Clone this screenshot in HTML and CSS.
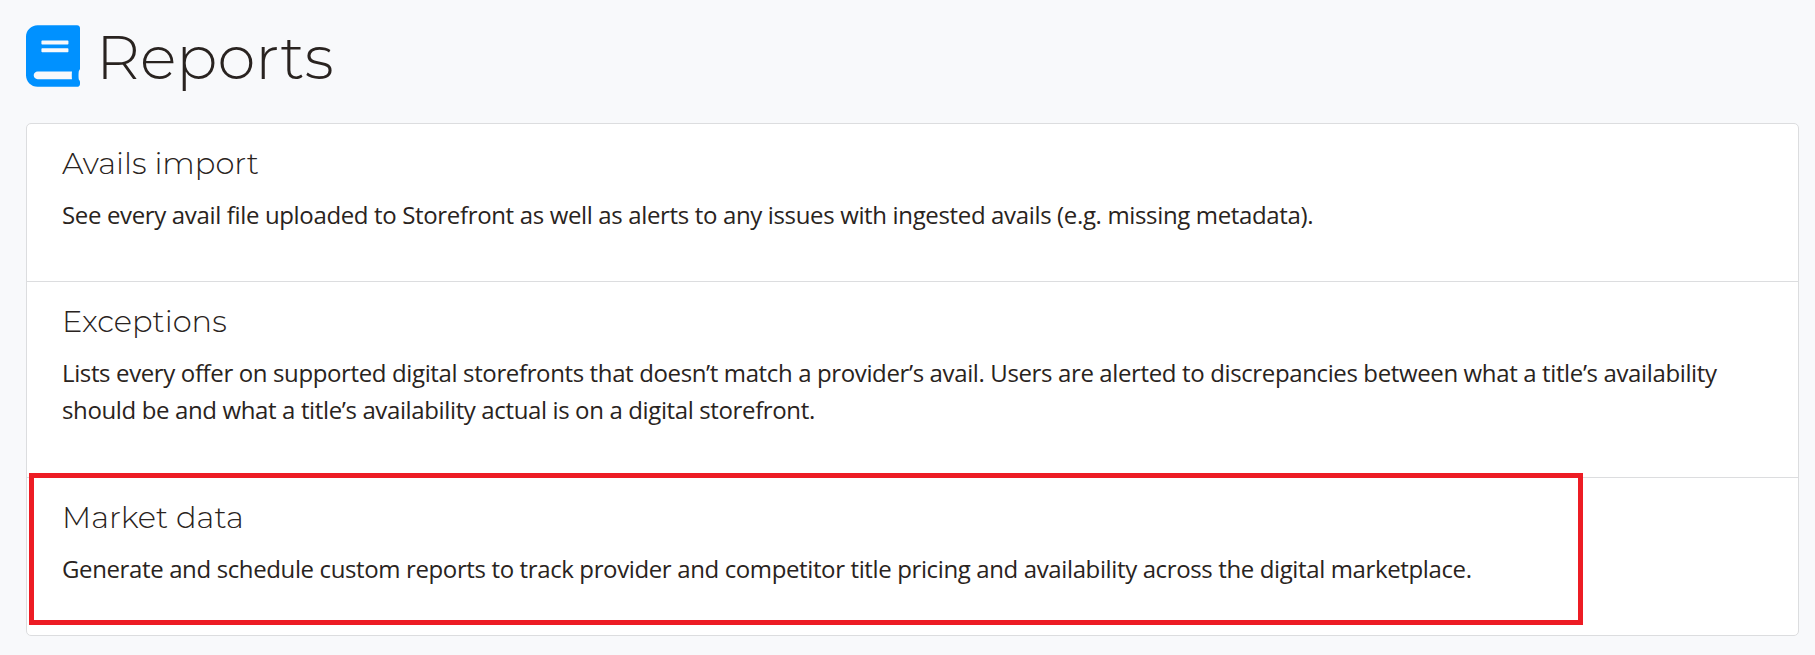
FILE: index.html
```html
<!DOCTYPE html>
<html lang="en">
<head>
    <meta charset="UTF-8">
    <meta name="viewport" content="width=device-width, initial-scale=1.0">
    <title>Reports</title>
    <link rel="stylesheet" href="styles.css">
</head>
<body>

    <div class="page">
        <header class="page-header">
            <svg class="book-icon" viewBox="0 0 448 512" aria-hidden="true">
                <path fill="currentColor" d="M448 360V24c0-13.3-10.7-24-24-24H96C43 0 0 43 0 96v320c0 53 43 96 96 96h328c13.3 0 24-10.7 24-24v-16c0-7.5-3.5-14.3-8.9-18.7-4.2-15.4-4.2-59.3 0-74.7 5.4-4.3 8.9-11.1 8.9-18.6zM128 134c0-3.3 2.7-6 6-6h212c3.3 0 6 2.7 6 6v20c0 3.3-2.7 6-6 6H134c-3.3 0-6-2.7-6-6v-20zm0 64c0-3.3 2.7-6 6-6h212c3.3 0 6 2.7 6 6v20c0 3.3-2.7 6-6 6H134c-3.3 0-6-2.7-6-6v-20zm253.4 250H96c-17.7 0-32-14.3-32-32 0-17.6 14.4-32 32-32h285.4c-1.9 17.1-1.9 46.9 0 64z"/>
            </svg>
            <h1>Reports</h1>
        </header>

        <div class="report-list">
            <section class="report avails">
                <h2>Avails import</h2>
                <p>See every avail file uploaded to Storefront as well as alerts to any issues with ingested avails (e.g. missing metadata).</p>
            </section>
            <section class="report exceptions">
                <h2>Exceptions</h2>
                <p>Lists every offer on supported digital storefronts that doesn’t match a provider’s avail. Users are alerted to discrepancies between what a title’s availability<br>should be and what a title’s availability actual is on a digital storefront.</p>
            </section>
            <section class="report market">
                <h2>Market data</h2>
                <p>Generate and schedule custom reports to track provider and competitor title pricing and availability across the digital marketplace.</p>
                <div class="highlight"></div>
            </section>
        </div>
    </div>

</body>
</html>
```

FILE: styles.css
```css
* {
    box-sizing: border-box;
}
body {
    margin: 0;
    background-color: #f8f9fb;
    color: #292320;
    font-family: "Segoe UI", "Open Sans", sans-serif;
    font-size: 24px;
    line-height: 37px;
}
.page {
    padding: 25px 16px 0 26px;
}
.page-header {
    display: flex;
    height: 98px;
}
.book-icon {
    width: 54px;
    height: 62px;
    color: #0091ff;
}
h1, h2 {
    font-family: Montserrat, Inter, sans-serif;
    font-weight: 300;
    margin: 0;
}
h1 {
    margin-left: 16px;
    font-size: 61px;
    line-height: 64px;
}
h2 {
    font-size: 30.5px;
    line-height: 38px;
    margin-bottom: 14px;
}
.report-list {
    background: white;
    border: 1px solid #dcdddf;
    border-radius: 5px;
}
.report {
    position: relative;
    height: 158px;
    padding: 20px 36px 0 35px;
    border-bottom: 1px solid #dcdddf;
}
.report p {
    margin: 0;
    white-space: nowrap;
    letter-spacing: -0.35px;
}
.exceptions {
    height: 196px;
}
.report.exceptions p {
    letter-spacing: -0.37px;
}
.market {
    height: 157px;
    border-bottom: 0;
}
.report.market p {
    letter-spacing: -0.375px;
}
/* red box drawn over the market data row */
.highlight {
    position: absolute;
    top: -5px;
    left: 2px;
    width: 1554px;
    height: 152px;
    border: 5px solid #ed1c24;
}
```
